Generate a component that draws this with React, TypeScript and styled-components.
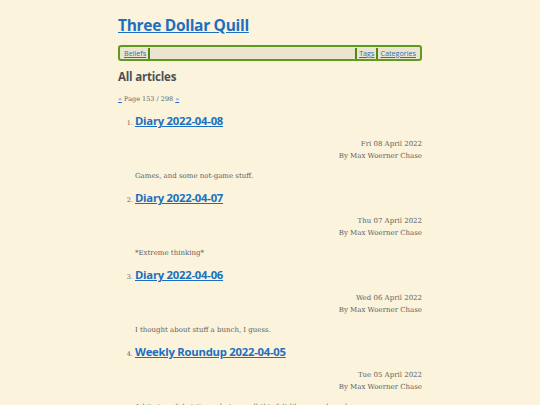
import React from 'react';
import styled, { createGlobalStyle } from 'styled-components';

const GlobalStyle = createGlobalStyle`
  body {
    margin: 0;
    background: #fbf3dc;
    font-family: "DejaVu Serif", "Liberation Serif", serif;
    color: #5f6163;
  }
`;

const Page = styled.div`
  width: 304px;
  margin: 0 auto;
  padding-top: 15px;
`;

const SiteTitle = styled.h1`
  margin: 0;
  font-family: "Open Sans", "Noto Sans", sans-serif;
  font-size: 15.5px;
  line-height: 20px;
  font-weight: 700;
  letter-spacing: -0.3px;

  a {
    color: #1c6fc0;
  }
`;

const Nav = styled.nav`
  display: flex;
  align-items: center;
  height: 12px;
  margin-top: 10px;
  padding: 0 2px;
  border: 2px solid #5e9a22;
  border-radius: 3px;
  background: #ebe4cf;
  font-family: "Open Sans", "Noto Sans", sans-serif;
  font-size: 7.2px;
`;

const NavLink = styled.a`
  color: #2a6fbf;
  padding: 0 2px;
`;

const Bar = styled.span`
  width: 2px;
  height: 11px;
  background: #4f8a16;
`;

const Spacer = styled.span`
  flex: 1;
`;

const Heading = styled.h2`
  margin: 8px 0 0;
  font-family: "Open Sans", "Noto Sans", sans-serif;
  font-size: 11.5px;
  line-height: 16px;
  font-weight: 700;
  color: #4b5154;
  letter-spacing: -0.2px;
`;

const Pager = styled.div`
  margin-top: 9px;
  font-size: 6.5px;
  line-height: 10px;

  a {
    color: #2a6fbf;
  }
`;

const List = styled.ol`
  margin: 9px 0 0;
  padding-left: 17px;
`;

const Item = styled.li`
  font-size: 6.5px;
  padding-bottom: 8px;

  &::marker {
    color: #5f6163;
  }
`;

const PostTitle = styled.h3`
  margin: 0;
  font-family: "Open Sans", "Noto Sans", sans-serif;
  font-size: 11.3px;
  line-height: 16px;
  font-weight: 700;
  letter-spacing: -0.25px;

  a {
    color: #1c6fc0;
  }
`;

const Meta = styled.div`
  margin-top: 9px;
  text-align: right;
  font-size: 7px;
  line-height: 12px;
`;

const Summary = styled.p`
  margin: 8px 0 0;
  font-size: 7px;
  line-height: 12px;
`;

const posts = [
  { title: 'Diary 2022-04-08', date: 'Fri 08 April 2022', summary: 'Games, and some not-game stuff.' },
  { title: 'Diary 2022-04-07', date: 'Thu 07 April 2022', summary: '*Extreme thinking*' },
  { title: 'Diary 2022-04-06', date: 'Wed 06 April 2022', summary: 'I thought about stuff a bunch, I guess.' },
  { title: 'Weekly Roundup 2022-04-05', date: 'Tue 05 April 2022', summary: 'A bit stressful at times, but overall this felt like a good week.' },
];

const App = () => {
  return (
    <>
      <GlobalStyle />
      <Page>
        <SiteTitle><a href="#">Three Dollar Quill</a></SiteTitle>
        <Nav>
          <NavLink href="#">Beliefs</NavLink>
          <Bar />
          <Spacer />
          <Bar />
          <NavLink href="#">Tags</NavLink>
          <Bar />
          <NavLink href="#">Categories</NavLink>
        </Nav>
        <Heading>All articles</Heading>
        <Pager><a href="#">«</a> Page 153 / 298 <a href="#">»</a></Pager>
        <List>
          {posts.map(p => (
            <Item key={p.title}>
              <PostTitle><a href="#">{p.title}</a></PostTitle>
              <Meta>
                <div>{p.date}</div>
                <div>By Max Woerner Chase</div>
              </Meta>
              <Summary>{p.summary}</Summary>
            </Item>
          ))}
        </List>
      </Page>
    </>
  );
};

export default App;
